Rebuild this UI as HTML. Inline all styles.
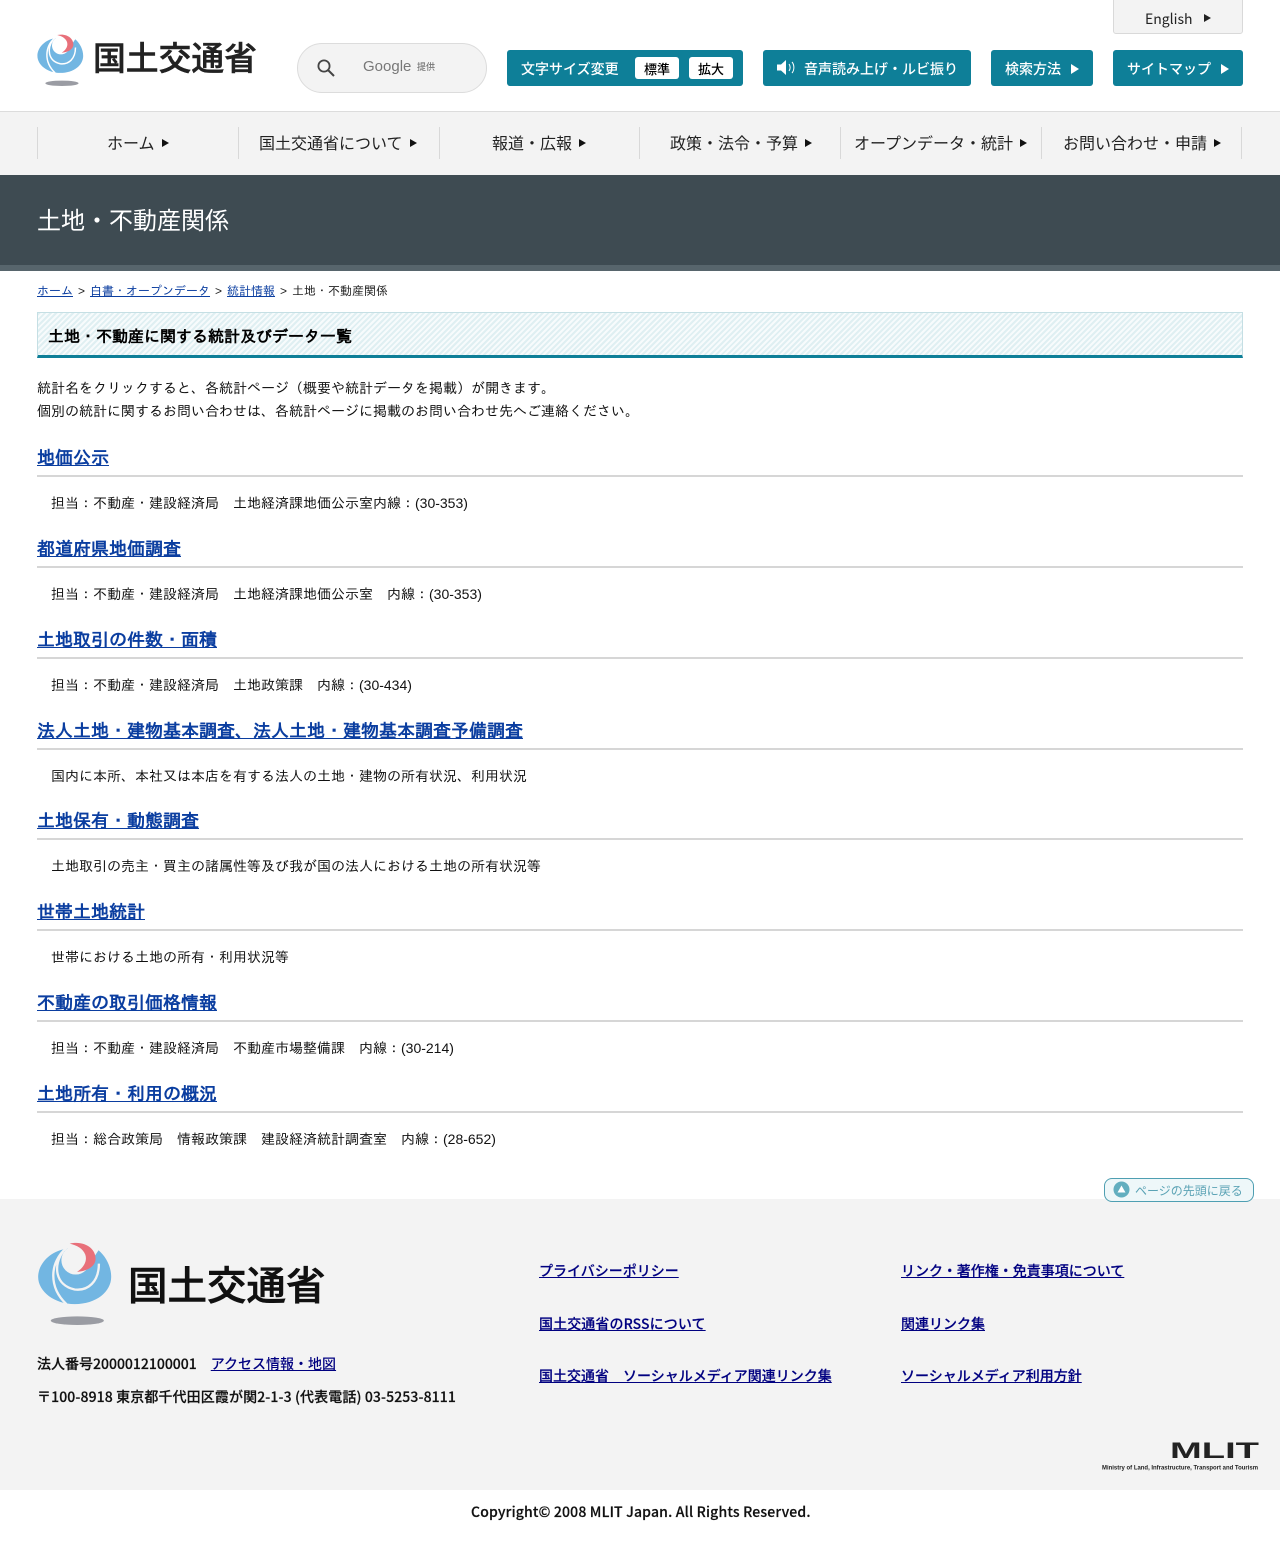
<!DOCTYPE html>
<html lang="ja"><head><meta charset="utf-8"><title>土地・不動産関係</title>
<style>
*{box-sizing:border-box}
html,body{margin:0;padding:0;background:#fff}
body{position:relative;width:1280px;height:1542px;overflow:hidden;font-family:"Liberation Sans","IPAGothic",sans-serif;color:#000}
.a{position:absolute;white-space:nowrap}
.n{font-family:"Noto Sans CJK JP","Liberation Sans",sans-serif}
.tb{position:absolute;background:#0e7f98;border-radius:3px;top:50px;height:36px;color:#fff;font-family:"Noto Sans CJK JP",sans-serif;font-size:14px;font-weight:500;line-height:39px;white-space:nowrap}
.tri{display:inline-block;width:0;height:0;border-left:8px solid currentColor;border-top:5px solid transparent;border-bottom:5px solid transparent}
.wb{position:absolute;top:57px;height:22px;background:#fff;border-radius:3px;color:#000;font-size:13px;line-height:23px;text-align:center}
.sep{position:absolute;top:127px;height:32px;width:1px;background:#d8d8d8}
.nav{position:absolute;top:126px;height:32px;line-height:32px;font-family:"Noto Sans CJK JP",sans-serif;font-size:16px;color:#222;white-space:nowrap}
.nav .tri{border-left-width:7px;border-top-width:4.500px;border-bottom-width:4.500px;margin-left:7px;color:#111;position:relative;top:-2px}
h2{position:absolute;left:37px;margin:0;font-size:18px;line-height:26px;font-weight:bold;white-space:nowrap}
h2 a{color:#0b3ea0}
.ln{position:absolute;left:37px;width:1206px;height:2px;background:#d6d6d6}
.t{position:absolute;left:51px;font-size:14px;line-height:20px;white-space:nowrap;color:#111}
.fl{position:absolute;font-family:"Noto Sans CJK JP",sans-serif;font-size:14px;font-weight:500;line-height:20px;color:#000080;white-space:nowrap;-webkit-text-stroke:.15px #000080}
.fl a,.fa{color:#000080}
.bc{margin:0 5px}
.fs{-webkit-text-stroke:.2px #111;font-weight:500}
</style></head><body>

<div class="a n" style="left:1113px;top:-1px;width:130px;height:35px;background:#f3f3f3;border:1px solid #d9d9d9;border-radius:0 0 3px 3px;font-size:14px;line-height:38px;color:#222;padding-left:31px">English <span class="tri" style="margin-left:8px;position:relative;top:-2px;border-left-width:7px;border-top-width:4.500px;border-bottom-width:4.500px"></span></div>

<svg class="a" style="left:37px;top:34px" width="47" height="52" viewBox="55 20 222 250"><path d="M140 40C85 50 55 90 55 125C55 170 105 207 165 207C230 207 275 170 275 125C275 95 260 65 237 45L200 100L150 40Z" fill="#72b6e2"/><circle cx="168" cy="75" r="43" fill="#fff"/><path d="M140 38C90 80 85 155 140 207M130 48C100 90 105 150 165 163C205 168 238 140 238 85" fill="none" stroke="#fff" stroke-width="7"/><path d="M150 25C195 15 228 40 228 70C228 95 200 108 172 110C195 95 203 75 197 58C190 40 172 30 150 25Z" fill="#e8707a"/><ellipse cx="173" cy="257" rx="80" ry="13" fill="#9a9ca3"/></svg>
<div class="a n" style="left:93px;top:34px;font-size:32.800px;line-height:46px;font-weight:500;color:#222;-webkit-text-stroke:.5px #222">国土交通省</div>

<div class="a" style="left:297px;top:43px;width:190px;height:50px;border-radius:25px;background:#f3f3f3;border:1px solid #dcdcdc"></div>
<svg class="a" style="left:316px;top:58px" width="20" height="20" viewBox="0 0 20 20"><circle cx="8" cy="8" r="5.600" fill="none" stroke="#444" stroke-width="1.800"/><path d="M12 12L18 18" stroke="#444" stroke-width="2"/></svg>
<div class="a" style="left:363px;top:57px;font-size:15px;line-height:20px;color:#777">Google</div>
<div class="a n" style="left:417px;top:60px;font-size:9px;line-height:14px;color:#777;font-weight:500">提供</div>

<div class="tb" style="left:507px;width:236px;padding-left:14px">文字サイズ変更</div>
<div class="wb n" style="left:635px;width:44px;font-weight:500">標準</div>
<div class="wb n" style="left:689px;width:44px;font-weight:500">拡大</div>
<div class="tb" style="left:763px;width:208px;padding-left:41px">音声読み上げ・ルビ振り</div>
<svg class="a" style="left:776px;top:59px" width="20" height="17" viewBox="0 0 20 17"><path d="M1 5.500H5L10 1V16L5 11.500H1Z" fill="#fff"/><path d="M13 5C14.500 7 14.500 10 13 12M16 3C18.500 6 18.500 11 16 14" fill="none" stroke="#fff" stroke-width="1"/></svg>
<div class="tb" style="left:991px;width:102px;padding-left:14px">検索方法<span class="tri" style="margin-left:10px"></span></div>
<div class="tb" style="left:1113px;width:130px;padding-left:14px">サイトマップ<span class="tri" style="margin-left:10px"></span></div>

<div class="a" style="left:0;top:111px;width:1280px;height:64px;background:#f3f3f3;border-top:1px solid #dcdcdc"></div>
<div class="sep" style="left:37px"></div><div class="sep" style="left:238px"></div><div class="sep" style="left:439px"></div><div class="sep" style="left:639px"></div><div class="sep" style="left:840px"></div><div class="sep" style="left:1041px"></div><div class="sep" style="left:1241px"></div>
<div class="nav" style="left:107px">ホーム<span class="tri"></span></div>
<div class="nav" style="left:259px">国土交通省について<span class="tri"></span></div>
<div class="nav" style="left:492px">報道・広報<span class="tri"></span></div>
<div class="nav" style="left:670px">政策・法令・予算<span class="tri"></span></div>
<div class="nav" style="left:854px">オープンデータ・統計<span class="tri"></span></div>
<div class="nav" style="left:1063px">お問い合わせ・申請<span class="tri"></span></div>

<div class="a" style="left:0;top:175px;width:1280px;height:96px;background:#3e4b52;border-bottom:6px solid #57656c"></div>
<div class="a n" style="left:37px;top:201px;font-size:24px;line-height:36px;color:#fff">土地・不動産関係</div>

<div class="a" style="left:37px;top:283px;font-size:12px;line-height:16px;color:#222"><a style="color:#0b3ea0;text-decoration:underline">ホーム</a><span class="bc">&gt;</span><a style="color:#0b3ea0;text-decoration:underline">白書・オープンデータ</a><span class="bc">&gt;</span><a style="color:#0b3ea0;text-decoration:underline">統計情報</a><span class="bc">&gt;</span>土地・不動産関係</div>

<div class="a" style="left:37px;top:312px;width:1206px;height:46px;border:1px solid #c5dfe4;border-bottom:3px solid #0e7f98;background:repeating-linear-gradient(135deg,#dfeff2 0,#dfeff2 2px,#f7fbfc 2px,#f7fbfc 4px)"></div>
<div class="a" style="left:48px;top:327px;font-size:16px;line-height:22px;font-weight:bold">土地・不動産に関する統計及びデータ一覧</div>

<div class="a" style="left:37px;top:377px;font-size:14px;line-height:23px;color:#111">統計名をクリックすると、各統計ページ（概要や統計データを掲載）が開きます。<br>個別の統計に関するお問い合わせは、各統計ページに掲載のお問い合わせ先へご連絡ください。</div>

<h2 style="top:445px"><a href="#">地価公示</a></h2><div class="ln" style="top:475px"></div><div class="t" style="top:493px">担当：不動産・建設経済局　土地経済課地価公示室内線：(30-353)</div>
<h2 style="top:536px"><a href="#">都道府県地価調査</a></h2><div class="ln" style="top:566px"></div><div class="t" style="top:584px">担当：不動産・建設経済局　土地経済課地価公示室　内線：(30-353)</div>
<h2 style="top:627px"><a href="#">土地取引の件数・面積</a></h2><div class="ln" style="top:657px"></div><div class="t" style="top:675px">担当：不動産・建設経済局　土地政策課　内線：(30-434)</div>
<h2 style="top:718px"><a href="#">法人土地・建物基本調査、法人土地・建物基本調査予備調査</a></h2><div class="ln" style="top:748px"></div><div class="t" style="top:766px">国内に本所、本社又は本店を有する法人の土地・建物の所有状況、利用状況</div>
<h2 style="top:808px"><a href="#">土地保有・動態調査</a></h2><div class="ln" style="top:838px"></div><div class="t" style="top:856px">土地取引の売主・買主の諸属性等及び我が国の法人における土地の所有状況等</div>
<h2 style="top:899px"><a href="#">世帯土地統計</a></h2><div class="ln" style="top:929px"></div><div class="t" style="top:947px">世帯における土地の所有・利用状況等</div>
<h2 style="top:990px"><a href="#">不動産の取引価格情報</a></h2><div class="ln" style="top:1020px"></div><div class="t" style="top:1038px">担当：不動産・建設経済局　不動産市場整備課　内線：(30-214)</div>
<h2 style="top:1081px"><a href="#">土地所有・利用の概況</a></h2><div class="ln" style="top:1111px"></div><div class="t" style="top:1129px">担当：総合政策局　情報政策課　建設経済統計調査室　内線：(28-652)</div>

<div class="a" style="left:0;top:1199px;width:1280px;height:291px;background:#f3f3f3"></div>
<div class="a n" style="left:1104px;top:1178px;width:150px;height:24px;border:1px solid #4f9fb2;border-radius:8px;background:#eef7f9;color:#5ba3b5;font-size:12px;line-height:23px;padding-left:30px">ページの先頭に戻る</div>
<svg class="a" style="left:1113px;top:1181px" width="17" height="17" viewBox="0 0 17 17"><circle cx="8.500" cy="8.500" r="8" fill="#62aebf"/><path d="M8.500 4.500L12.500 11.500H4.500Z" fill="#fff"/></svg>

<svg class="a" style="left:38px;top:1242px" width="74" height="83" viewBox="55 20 222 250"><path d="M140 40C85 50 55 90 55 125C55 170 105 207 165 207C230 207 275 170 275 125C275 95 260 65 237 45L200 100L150 40Z" fill="#72b6e2"/><circle cx="168" cy="75" r="43" fill="#f3f3f3"/><path d="M140 38C90 80 85 155 140 207M130 48C100 90 105 150 165 163C205 168 238 140 238 85" fill="none" stroke="#f3f3f3" stroke-width="7"/><path d="M150 25C195 15 228 40 228 70C228 95 200 108 172 110C195 95 203 75 197 58C190 40 172 30 150 25Z" fill="#e8707a"/><ellipse cx="173" cy="257" rx="80" ry="13" fill="#9a9ca3"/></svg>
<div class="a n" style="left:128px;top:1256px;font-size:39.500px;line-height:56px;font-weight:500;color:#111;-webkit-text-stroke:.6px #111">国土交通省</div>

<div class="a n fs" style="left:37px;top:1354px;font-size:14px;line-height:20px;color:#111">法人番号2000012100001　<a class="fa" style="text-decoration:underline;-webkit-text-stroke:0">アクセス情報・地図</a></div>
<div class="a n fs" style="left:37px;top:1387px;font-size:14px;line-height:20px;color:#111;letter-spacing:.11px">〒100-8918 東京都千代田区霞が関2-1-3 (代表電話) 03-5253-8111</div>

<div class="fl" style="left:539px;top:1261px"><a href="#">プライバシーポリシー</a></div>
<div class="fl" style="left:539px;top:1314px;letter-spacing:.1px"><a href="#">国土交通省のRSSについて</a></div>
<div class="fl" style="left:539px;top:1366px"><a href="#">国土交通省　ソーシャルメディア関連リンク集</a></div>
<div class="fl" style="left:901px;top:1261px"><a href="#">リンク・著作権・免責事項について</a></div>
<div class="fl" style="left:901px;top:1314px"><a href="#">関連リンク集</a></div>
<div class="fl" style="left:901px;top:1366px"><a href="#">ソーシャルメディア利用方針</a></div>

<svg class="a" style="left:1100px;top:1440px" width="160" height="32" viewBox="0 0 160 32"><text x="70" y="18" font-family="Liberation Sans,sans-serif" font-weight="bold" font-size="22" fill="#222" textLength="89" lengthAdjust="spacingAndGlyphs">MLIT</text><text x="2" y="29.500" font-family="Liberation Sans,sans-serif" font-weight="bold" font-size="6" fill="#222" textLength="156" lengthAdjust="spacingAndGlyphs">Ministry of Land, Infrastructure, Transport and Tourism</text></svg>

<div class="a n fs" style="left:471px;top:1502px;font-size:14px;line-height:21px;color:#111;letter-spacing:.17px">Copyright© 2008 MLIT Japan. All Rights Reserved.</div>
</body></html>
